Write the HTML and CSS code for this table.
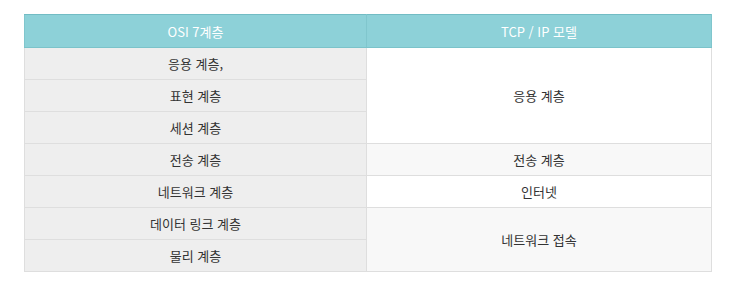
FILE: index.html
```html
<!DOCTYPE html>
<html lang="ko">
<head>
<meta charset="utf-8">
<link rel="stylesheet" href="styles.css">
</head>
<body>
<div class="wrap">
<table class="osi">
<colgroup><col class="c1"><col class="c2"></colgroup>
<thead>
<tr><th>OSI 7계층</th><th>TCP / IP 모델</th></tr>
</thead>
<tbody>
<tr><td class="l">응용 계층,</td><td class="r w" rowspan="3">응용 계층</td></tr>
<tr><td class="l">표현 계층</td></tr>
<tr><td class="l">세션 계층</td></tr>
<tr><td class="l">전송 계층</td><td class="r g">전송 계층</td></tr>
<tr><td class="l">네트워크 계층</td><td class="r w">인터넷</td></tr>
<tr><td class="l">데이터 링크 계층</td><td class="r g" rowspan="2">네트워크 접속</td></tr>
<tr><td class="l">물리 계층</td></tr>
</tbody>
</table>
</div>
</body>
</html>
```
FILE: styles.css
```css
html, body { margin: 0; padding: 0; background: #fff; }
.wrap { padding: 14px 38px 0 24px; }
.osi {
  width: 688px;
  border-collapse: collapse;
  table-layout: fixed;
  font-family: "Noto Sans CJK KR", "Noto Sans", sans-serif;
  font-size: 13px;
  color: #333;
}
.osi .c1 { width: 342px; }
.osi th {
  background: #8dd1d8;
  color: #fff;
  font-weight: normal;
  height: 32px;
  padding: 0;
  border-top: 1px solid #72bcc4;
  border-bottom: 1px solid #7bc3ca;
  border-left: 1px solid #80c6cd;
  border-right: 1px solid #80c6cd;
  text-align: center;
  vertical-align: middle;
}
.osi td {
  height: 31px;
  padding: 0;
  text-align: center;
  vertical-align: middle;
  border: 1px solid #dedede;
}
.osi td.l { background: #eeeeee; }
.osi td.w { background: #ffffff; }
.osi td.g { background: #f8f8f8; }
```
